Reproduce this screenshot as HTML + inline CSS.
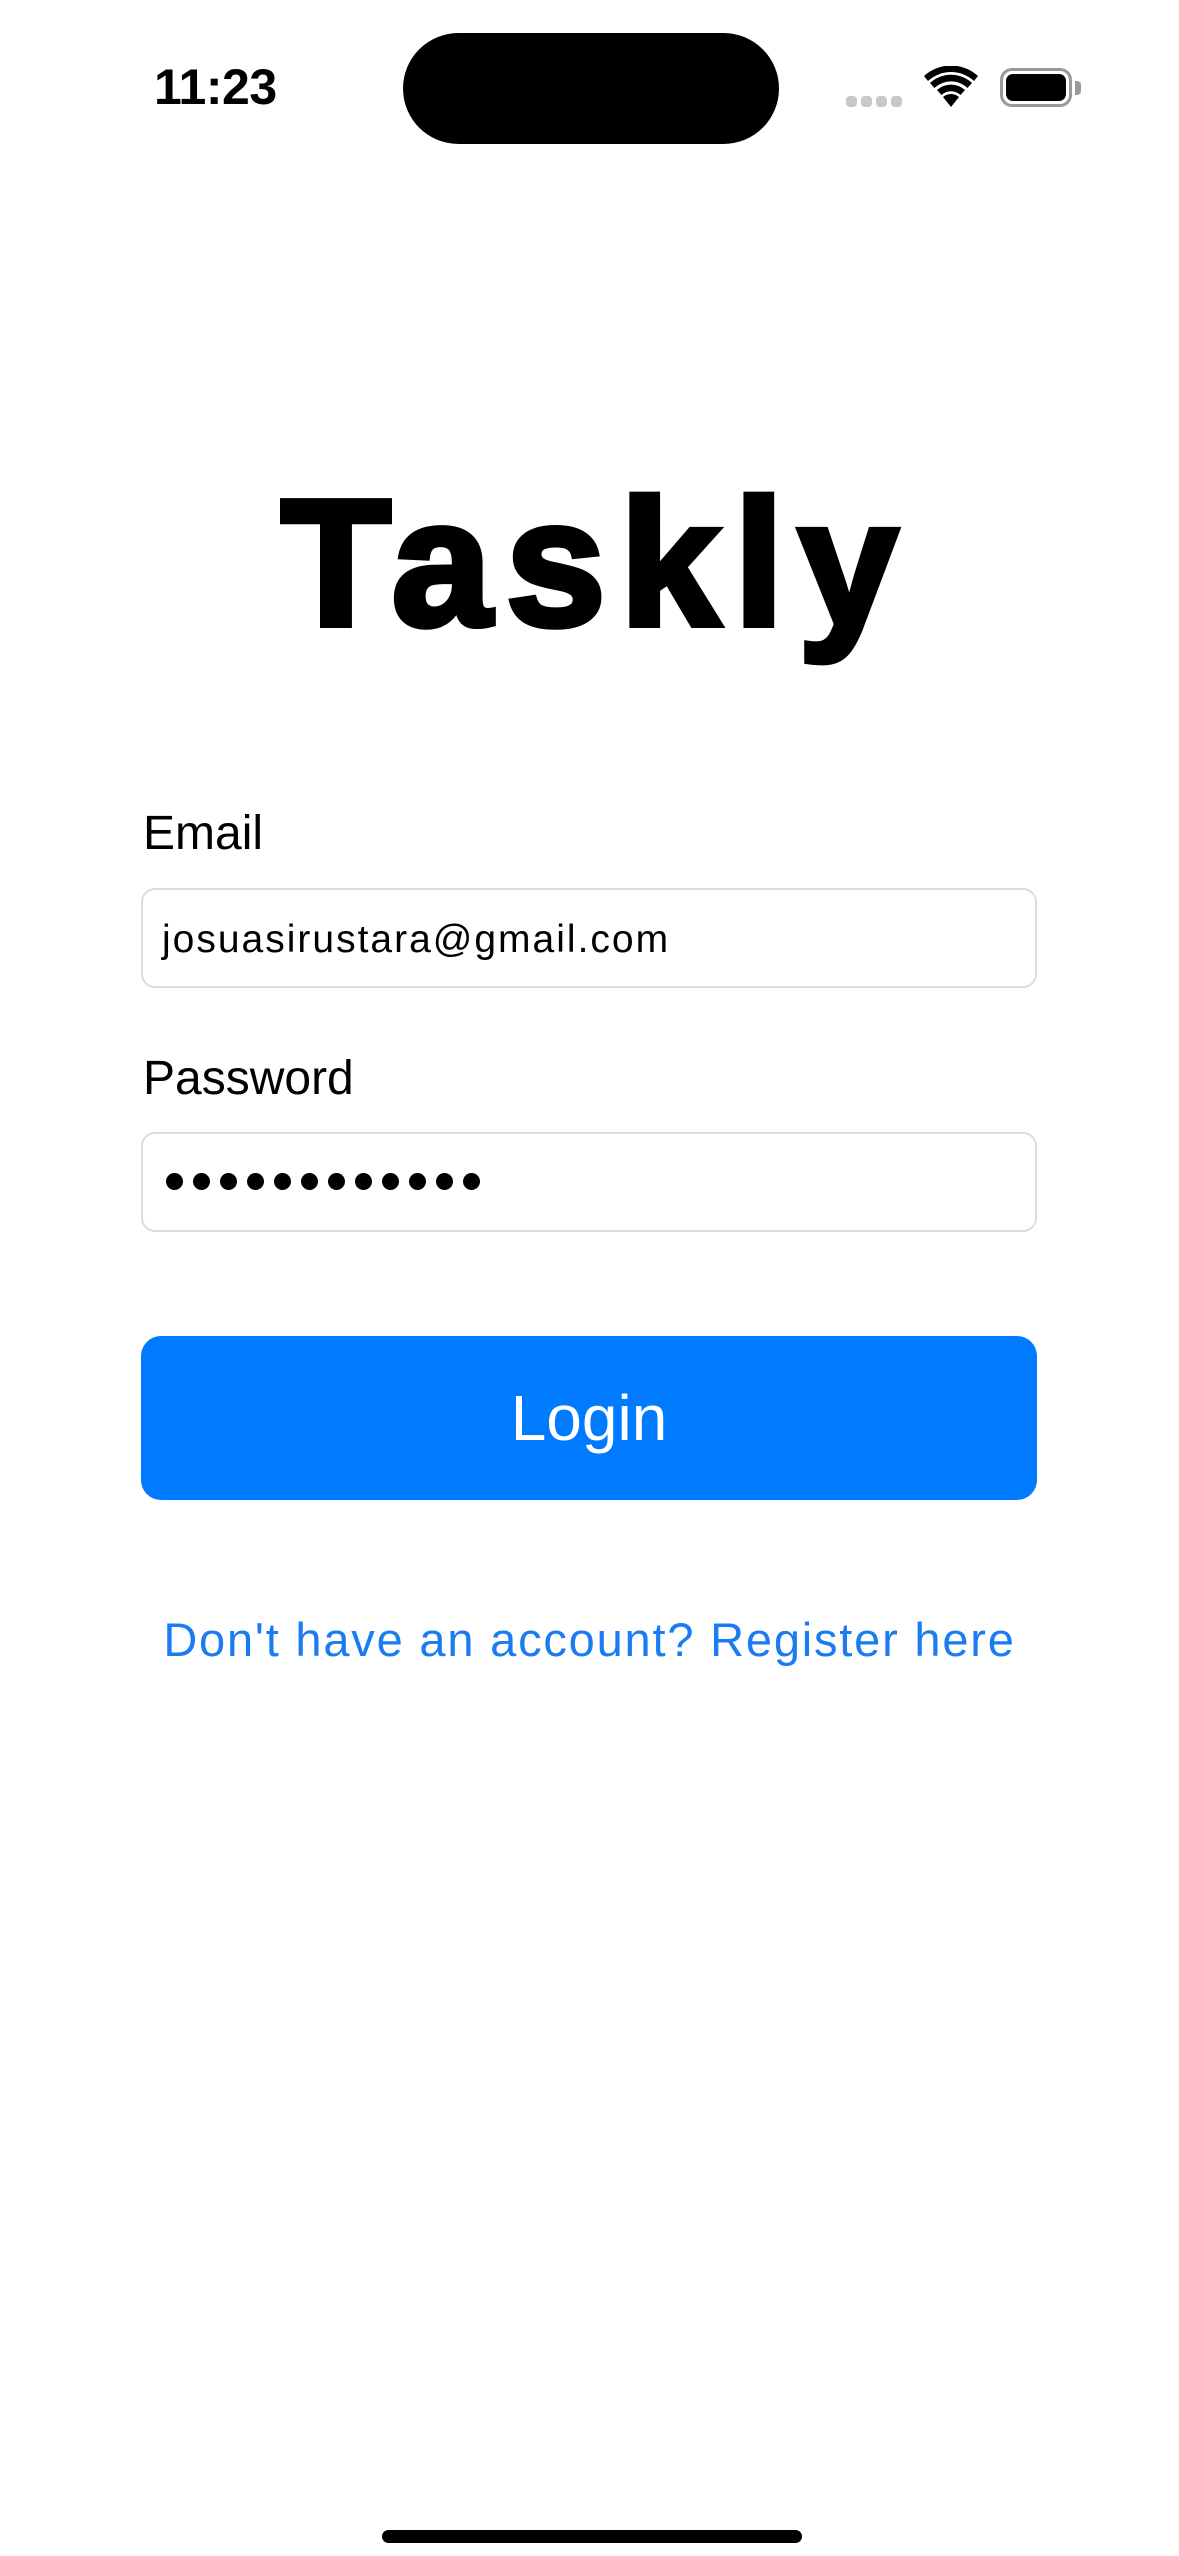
<!DOCTYPE html>
<html><head><meta charset="utf-8"><style>
html,body{margin:0;padding:0;background:#fff;}
body{width:1179px;height:2556px;position:relative;overflow:hidden;font-family:"Liberation Sans",sans-serif;}
.abs{position:absolute;}
.time{left:154px;top:58px;font-size:50px;font-weight:bold;letter-spacing:-0.5px;color:#000;}
.pill{left:403px;top:33px;width:376px;height:111px;border-radius:56px;background:#000;}
.title{left:0;width:1179px;top:474px;text-align:center;font-size:180px;font-weight:bold;color:#000;-webkit-text-stroke:6px #000;letter-spacing:14px;text-indent:14px;line-height:1;}
.label{left:143px;font-size:48px;color:#000;line-height:1;}
.field{left:141px;width:896px;height:100px;border:2px solid #dcdcdc;border-radius:14px;box-sizing:border-box;}
.ftext{left:162px;font-size:39px;color:#000;line-height:1;letter-spacing:2px;}
.dot{width:17px;height:17px;border-radius:50%;background:#000;top:1173px;}
.btn{left:141px;top:1336px;width:896px;height:164px;background:#007aff;border-radius:20px;color:#fff;font-size:64px;text-align:center;line-height:164px;}
.link{left:0;width:1179px;top:1616px;text-align:center;font-size:47px;color:#1a7cf0;line-height:1;letter-spacing:1.8px;}
.home{left:382px;top:2530px;width:420px;height:13px;border-radius:7px;background:#000;}
</style></head><body>
<div class="abs time">11:23</div>
<div class="abs pill"></div>
<div class="abs" style="left:846px;top:96px;width:11px;height:11px;border-radius:4px;background:#c8c8c8"></div>
<div class="abs" style="left:861px;top:96px;width:11px;height:11px;border-radius:4px;background:#c8c8c8"></div>
<div class="abs" style="left:876px;top:96px;width:11px;height:11px;border-radius:4px;background:#c8c8c8"></div>
<div class="abs" style="left:891px;top:96px;width:11px;height:11px;border-radius:4px;background:#c8c8c8"></div>
<svg class="abs" style="left:922px;top:66px" width="58" height="42" viewBox="0 0 58 42">
<path d="M29 41 L21 31 A12 12 0 0 1 37 31 Z" fill="#000"/>
<path d="M15 24 A21 21 0 0 1 43 24 L38.5 29 A14 14 0 0 0 19.5 29 Z" fill="#000"/>
<path d="M8 17 A31 31 0 0 1 50 17 L45.5 22 A24 24 0 0 0 12.5 22 Z" fill="#000"/>
<path d="M2 10 A40 40 0 0 1 56 10 L52 15 A34 34 0 0 0 6 15 Z" fill="#000"/>
</svg>
<div class="abs" style="left:1000px;top:68px;width:72px;height:39px;border:3px solid #999;border-radius:12px;box-sizing:border-box"></div>
<div class="abs" style="left:1006px;top:74px;width:60px;height:27px;border-radius:7px;background:#000"></div>
<div class="abs" style="left:1075px;top:81px;width:6px;height:14px;border-radius:0 4px 4px 0;background:#999"></div>

<div class="abs title">Taskly</div>

<div class="abs label" style="top:810px">Email</div>
<div class="abs field" style="top:888px"></div>
<div class="abs ftext" style="top:920px">josuasirustara@gmail.com</div>

<div class="abs label" style="top:1055px">Password</div>
<div class="abs field" style="top:1132px"></div>
<div class="abs dot" style="left:166px"></div>
<div class="abs dot" style="left:193px"></div>
<div class="abs dot" style="left:220px"></div>
<div class="abs dot" style="left:247px"></div>
<div class="abs dot" style="left:274px"></div>
<div class="abs dot" style="left:301px"></div>
<div class="abs dot" style="left:328px"></div>
<div class="abs dot" style="left:355px"></div>
<div class="abs dot" style="left:382px"></div>
<div class="abs dot" style="left:409px"></div>
<div class="abs dot" style="left:436px"></div>
<div class="abs dot" style="left:463px"></div>

<div class="abs btn">Login</div>
<div class="abs link">Don't have an account? Register here</div>
<div class="abs home"></div>
</body></html>
